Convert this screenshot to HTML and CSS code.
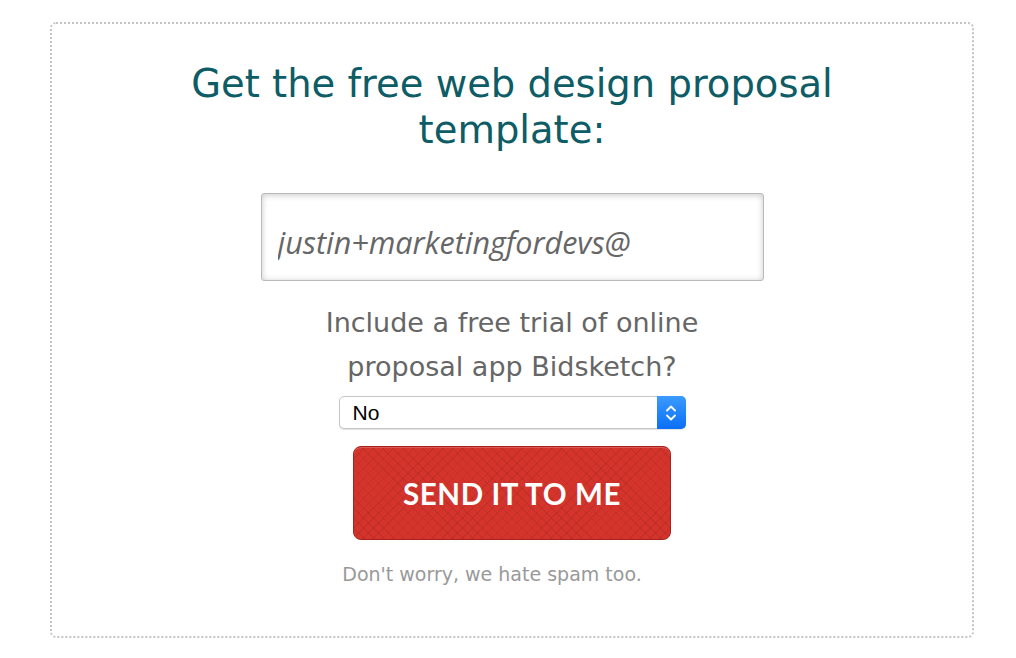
FILE: index.html
```html
<!DOCTYPE html>
<html lang="en">
<head>
    <meta charset="UTF-8">
    <meta name="viewport" content="width=device-width, initial-scale=1.0">
    <title>Free Web Design Proposal Template</title>
    <link rel="stylesheet" href="styles.css">
</head>
<body>
    <div class="optin">
        <h2 class="optin-title">Get the free web design proposal template:</h2>

        <form class="optin-form" onsubmit="return false;">
            <input class="optin-email" type="email" placeholder="justin+marketingfordevs@">

            <label class="optin-label" for="trial">Include a free trial of online<br>proposal app Bidsketch?</label>
            <div class="optin-select">
                <select id="trial">
                    <option>No</option>
                    <option>Yes</option>
                </select>
                <span class="optin-stepper">
                    <svg width="12" height="20" viewBox="0 0 12 20">
                        <path d="M2 7.5 L6 3.5 L10 7.5" fill="none" stroke="#fff" stroke-width="1.8" stroke-linecap="round" stroke-linejoin="round"/>
                        <path d="M2 12.5 L6 16.5 L10 12.5" fill="none" stroke="#fff" stroke-width="1.8" stroke-linecap="round" stroke-linejoin="round"/>
                    </svg>
                </span>
            </div>

            <button class="optin-button" type="submit">SEND IT TO ME</button>
        </form>

        <p class="optin-note">Don't worry, we hate spam too.</p>
    </div>
</body>
</html>
```

FILE: styles.css
```css
body {
    margin: 0;
    background-color: #fff;
    font-family: 'DejaVu Sans', sans-serif;
}

.optin {
    box-sizing: border-box;
    width: 924px;
    height: 616px;
    margin: 22px 0 0 50px;
    padding: 37px 0 0;
    border: 2px dotted #c4c4c4;
    border-radius: 6px;
    text-align: center;
}

.optin-title {
    margin: 0 auto;
    width: 700px;
    font-size: 38.5px;
    font-weight: normal;
    line-height: 46px;
    color: #0d5c66;
}

.optin-form {
    display: flex;
    flex-direction: column;
    align-items: center;
    margin-top: 40px;
}

.optin-email {
    box-sizing: border-box;
    width: 503px;
    height: 88px;
    padding: 10px 16px 0;
    border: 1px solid #b9b9b9;
    border-radius: 3px;
    box-shadow: inset 0 1px 6px rgba(0, 0, 0, 0.22);
    font-family: 'Open Sans', sans-serif;
    font-style: italic;
    font-size: 30.5px;
    color: #555;
}

.optin-email::placeholder {
    color: #666;
}

.optin-label {
    display: block;
    margin-top: 20px;
    font-size: 27px;
    line-height: 44px;
    color: #666;
}

.optin-select {
    position: relative;
    width: 347px;
    height: 33px;
    margin-top: 7px;
}

.optin-select select {
    box-sizing: border-box;
    width: 100%;
    height: 100%;
    padding: 0 13px;
    border: 1px solid #c6c6c6;
    border-radius: 5px;
    background: #fff;
    box-shadow: 0 1px 1px rgba(0, 0, 0, 0.12);
    appearance: none;
    font-family: 'Liberation Sans', sans-serif;
    font-size: 21px;
    color: #000;
}

.optin-stepper {
    position: absolute;
    top: 0;
    right: 0;
    width: 29px;
    height: 33px;
    display: flex;
    align-items: center;
    justify-content: center;
    border-radius: 0 5px 5px 0;
    background: linear-gradient(#3c9bff, #0a6ff5);
}

.optin-button {
    width: 318px;
    height: 94px;
    margin-top: 17px;
    border: 1px solid #a8221c;
    border-radius: 8px;
    background-color: #d4342b;
    background-image:
        repeating-linear-gradient(45deg, rgba(0, 0, 0, 0.07) 0 1px, transparent 1px 7px),
        repeating-linear-gradient(-45deg, rgba(0, 0, 0, 0.07) 0 1px, transparent 1px 7px);
    box-shadow: inset 0 1px 0 rgba(255, 255, 255, 0.2);
    font-family: 'Lato', sans-serif;
    font-weight: bold;
    font-size: 29.5px;
    letter-spacing: 0.6px;
    color: #fff;
    cursor: pointer;
}

.optin-note {
    margin: 23px 40px 0 0;
    font-size: 19px;
    color: #999;
}
```
